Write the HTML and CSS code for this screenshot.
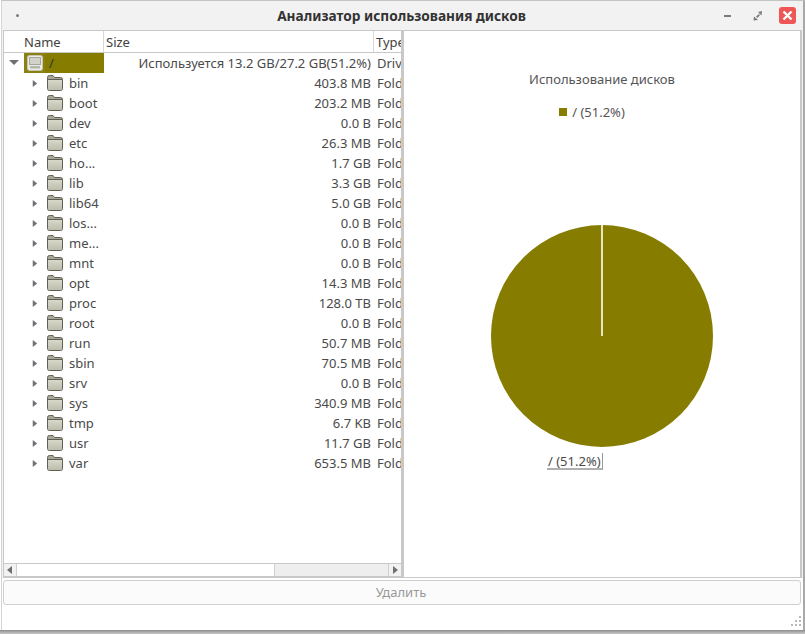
FILE: index.html
```html
<!DOCTYPE html>
<html lang="ru">
<head>
<meta charset="utf-8">
<title>Анализатор использования дисков</title>
<link rel="stylesheet" href="styles.css">
</head>
<body>
<svg class="defs" width="0" height="0" aria-hidden="true">
  <defs>
    <linearGradient id="fg" x1="0" y1="0" x2="0" y2="1"><stop offset="0" stop-color="#d8d8cb"/><stop offset="1" stop-color="#bdbdad"/></linearGradient>
  </defs>
  <symbol id="folder" viewBox="0 0 16 16">
    <path d="M0.5 2.5 Q0.5 0.5 2.5 0.5 H6 L7.5 2.5 H13.5 Q15.5 2.5 15.5 4.5 V13.5 Q15.5 15.5 13.5 15.5 H2.5 Q0.5 15.5 0.5 13.5 Z" fill="#a8a898" stroke="#5f5f54"/>
    <path d="M1 5 H15 V13.5 Q15 15 13.5 15 H2.5 Q1 15 1 13.5 Z" fill="url(#fg)"/>
    <path d="M1 4.5 H15" stroke="#5f5f54" fill="none"/>
  </symbol>
  <symbol id="arrow" viewBox="0 0 8 10">
    <path d="M2 1 L7 5 L2 9 Z" fill="#707070"/>
  </symbol>
</svg>
<main class="window">
  <header class="titlebar">
    <span class="menu-dot"></span>
    <h1 class="title">Анализатор использования дисков</h1>
    <div class="controls">
      <span class="minimize"></span>
      <svg class="maximize" width="10" height="10" viewBox="0 0 10 10"><path d="M5 1 L9 0 L8.5 4.5 Z M1 5.5 L0.5 9.5 L5 9 Z M3 5.5 L6 3 L7 4 L4.5 7 Z" fill="#7b7b7b"/></svg>
      <svg class="close" width="17" height="17" viewBox="0 0 17 17"><rect width="17" height="17" rx="3" fill="#ee5555"/><path d="M4.5 4.5 L12.5 12.5 M12.5 4.5 L4.5 12.5" stroke="#fff" stroke-width="2.4"/></svg>
    </div>
  </header>
  <div class="panes">
    <section class="tree-pane">
      <div class="tree-head">
        <div class="th th-name">Name</div>
        <div class="th th-size">Size</div>
        <div class="th th-type">Type</div>
      </div>
      <div class="tree-body">
        <div class="row">
          <div class="cell-name root-name">
            <svg class="expander-down" width="10" height="6" viewBox="0 0 10 6"><path d="M0 0 H10 L5 5 Z" fill="#707070"/></svg>
            <span class="selected">
              <span class="drive-box">
                <svg class="drive" width="16" height="16" viewBox="0 0 16 16"><rect x="0.5" y="0.5" width="15" height="15" rx="2" fill="#ecece6" stroke="#c4c4b4"/><rect x="2.5" y="2.5" width="11" height="7" fill="#d2d2cb" stroke="#a5a59b"/><rect x="3" y="11" width="10" height="2.5" fill="#b5b5aa"/></svg>
              </span>
              <span class="root-label">/</span>
            </span>
          </div>
          <div class="cell-size">Используется 13.2 GB/27.2 GB(51.2%)</div>
          <div class="cell-type">Drive</div>
        </div>
        <div class="row"><div class="cell-name"><svg class="arrow"><use href="#arrow"/></svg><svg class="folder"><use href="#folder"/></svg><span class="label">bin</span></div><div class="cell-size">403.8 MB</div><div class="cell-type">Folder</div></div>
        <div class="row"><div class="cell-name"><svg class="arrow"><use href="#arrow"/></svg><svg class="folder"><use href="#folder"/></svg><span class="label">boot</span></div><div class="cell-size">203.2 MB</div><div class="cell-type">Folder</div></div>
        <div class="row"><div class="cell-name"><svg class="arrow"><use href="#arrow"/></svg><svg class="folder"><use href="#folder"/></svg><span class="label">dev</span></div><div class="cell-size">0.0 B</div><div class="cell-type">Folder</div></div>
        <div class="row"><div class="cell-name"><svg class="arrow"><use href="#arrow"/></svg><svg class="folder"><use href="#folder"/></svg><span class="label">etc</span></div><div class="cell-size">26.3 MB</div><div class="cell-type">Folder</div></div>
        <div class="row"><div class="cell-name"><svg class="arrow"><use href="#arrow"/></svg><svg class="folder"><use href="#folder"/></svg><span class="label">ho...</span></div><div class="cell-size">1.7 GB</div><div class="cell-type">Folder</div></div>
        <div class="row"><div class="cell-name"><svg class="arrow"><use href="#arrow"/></svg><svg class="folder"><use href="#folder"/></svg><span class="label">lib</span></div><div class="cell-size">3.3 GB</div><div class="cell-type">Folder</div></div>
        <div class="row"><div class="cell-name"><svg class="arrow"><use href="#arrow"/></svg><svg class="folder"><use href="#folder"/></svg><span class="label">lib64</span></div><div class="cell-size">5.0 GB</div><div class="cell-type">Folder</div></div>
        <div class="row"><div class="cell-name"><svg class="arrow"><use href="#arrow"/></svg><svg class="folder"><use href="#folder"/></svg><span class="label">los...</span></div><div class="cell-size">0.0 B</div><div class="cell-type">Folder</div></div>
        <div class="row"><div class="cell-name"><svg class="arrow"><use href="#arrow"/></svg><svg class="folder"><use href="#folder"/></svg><span class="label">me...</span></div><div class="cell-size">0.0 B</div><div class="cell-type">Folder</div></div>
        <div class="row"><div class="cell-name"><svg class="arrow"><use href="#arrow"/></svg><svg class="folder"><use href="#folder"/></svg><span class="label">mnt</span></div><div class="cell-size">0.0 B</div><div class="cell-type">Folder</div></div>
        <div class="row"><div class="cell-name"><svg class="arrow"><use href="#arrow"/></svg><svg class="folder"><use href="#folder"/></svg><span class="label">opt</span></div><div class="cell-size">14.3 MB</div><div class="cell-type">Folder</div></div>
        <div class="row"><div class="cell-name"><svg class="arrow"><use href="#arrow"/></svg><svg class="folder"><use href="#folder"/></svg><span class="label">proc</span></div><div class="cell-size">128.0 TB</div><div class="cell-type">Folder</div></div>
        <div class="row"><div class="cell-name"><svg class="arrow"><use href="#arrow"/></svg><svg class="folder"><use href="#folder"/></svg><span class="label">root</span></div><div class="cell-size">0.0 B</div><div class="cell-type">Folder</div></div>
        <div class="row"><div class="cell-name"><svg class="arrow"><use href="#arrow"/></svg><svg class="folder"><use href="#folder"/></svg><span class="label">run</span></div><div class="cell-size">50.7 MB</div><div class="cell-type">Folder</div></div>
        <div class="row"><div class="cell-name"><svg class="arrow"><use href="#arrow"/></svg><svg class="folder"><use href="#folder"/></svg><span class="label">sbin</span></div><div class="cell-size">70.5 MB</div><div class="cell-type">Folder</div></div>
        <div class="row"><div class="cell-name"><svg class="arrow"><use href="#arrow"/></svg><svg class="folder"><use href="#folder"/></svg><span class="label">srv</span></div><div class="cell-size">0.0 B</div><div class="cell-type">Folder</div></div>
        <div class="row"><div class="cell-name"><svg class="arrow"><use href="#arrow"/></svg><svg class="folder"><use href="#folder"/></svg><span class="label">sys</span></div><div class="cell-size">340.9 MB</div><div class="cell-type">Folder</div></div>
        <div class="row"><div class="cell-name"><svg class="arrow"><use href="#arrow"/></svg><svg class="folder"><use href="#folder"/></svg><span class="label">tmp</span></div><div class="cell-size">6.7 KB</div><div class="cell-type">Folder</div></div>
        <div class="row"><div class="cell-name"><svg class="arrow"><use href="#arrow"/></svg><svg class="folder"><use href="#folder"/></svg><span class="label">usr</span></div><div class="cell-size">11.7 GB</div><div class="cell-type">Folder</div></div>
        <div class="row"><div class="cell-name"><svg class="arrow"><use href="#arrow"/></svg><svg class="folder"><use href="#folder"/></svg><span class="label">var</span></div><div class="cell-size">653.5 MB</div><div class="cell-type">Folder</div></div>
      </div>
      <div class="hscroll">
        <div class="sb-btn"><svg width="6" height="8" viewBox="0 0 6 8"><path d="M5 0 V8 L0 4 Z" fill="#707070"/></svg></div>
        <div class="sb-track"><div class="sb-thumb"></div></div>
        <div class="sb-btn"><svg width="6" height="8" viewBox="0 0 6 8"><path d="M1 0 V8 L6 4 Z" fill="#707070"/></svg></div>
      </div>
    </section>
    <section class="chart-pane">
      <div class="chart-title">Использование дисков</div>
      <div class="legend"><span class="swatch"></span><span>/ (51.2%)</span></div>
      <div class="pie-wrap">
        <svg class="pie" width="224" height="224" viewBox="0 0 224 224">
          <circle cx="112" cy="112" r="111" fill="#857c00"/>
          <path d="M112 1 V112" stroke="#e8e6c4" stroke-width="2" fill="none"/>
        </svg>
      </div>
      <div class="pie-label">/ (51.2%)</div>
    </section>
  </div>
  <div class="actions"><button class="delete" disabled>Удалить</button></div>
  <footer class="statusbar"><svg class="grip" width="11" height="11" viewBox="0 0 11 11"><path d="M9 0h2v2H9zM9 4h2v2H9zM5 4h2v2H5zM9 8h2v2H9zM5 8h2v2H5zM1 8h2v2H1z" fill="#b9b9b9"/></svg></footer>
</main>
<div class="backdrop-bottom"></div>
</body>
</html>
```
FILE: styles.css
```css
* { box-sizing: border-box; }
html, body { margin: 0; height: 100%; }
body {
  width: 805px; height: 634px; overflow: hidden; background: #fff;
  font: 13px/20px "Noto Sans", sans-serif; color: #4a4a4a;
  display: flex; flex-direction: column; position: relative;
}
.defs { position: absolute; }
.backdrop-bottom { flex: 1; background: linear-gradient(#8c8c8c, #c9c9c9); }
.window {
  width: 804px; height: 630px; margin-left: 1px; flex: none;
  display: flex; flex-direction: column; background: #fff;
  border-top: 1px solid #c4c4c4; border-right: 2px solid #a9a9a9; border-left: 1px solid #d4d4d4;
}
.titlebar {
  height: 29px; flex: none; background: #f2f2f2; display: flex; align-items: center; position: relative;
}
.menu-dot { width: 3px; height: 3px; border-radius: 50%; background: #7d7d7d; margin-left: 14px; }
.title {
  position: absolute; left: 0; right: 2px; margin: 0; text-align: center;
  font: 700 13.67px/28px "Noto Sans", sans-serif; color: #333;
}
.controls { margin-left: auto; margin-right: 7px; display: flex; align-items: center; position: relative; }
.minimize { width: 7px; height: 2px; background: #7b7b7b; margin-right: 22px; }
.maximize { margin-right: 16px; }
.panes { height: 548px; flex: none; display: flex; background: #f2f2f2; padding: 0 1px; }
.tree-pane {
  width: 400px; flex: none; border: 1px solid #c8c8c8; border-right-width: 2px;
  background: #fff; display: flex; flex-direction: column;
}
.tree-head { height: 22px; flex: none; display: flex; border-bottom: 1px solid #c8c8c8; color: #3f3f3f; line-height: 22px; overflow: hidden; }
.th { flex: none; border-right: 1px solid #d8d8d8; padding-left: 2px; overflow: hidden; }
.th-name { width: 100px; padding-left: 20px; }
.th-size { width: 270px; }
.th-type { width: 27px; border-right: 0; }
.tree-body { flex: 1; overflow: hidden; }
.row { height: 20px; display: flex; white-space: nowrap; }
.cell-name { width: 100px; flex: none; display: flex; align-items: center; padding-left: 27px; }
.root-name { padding-left: 5px; }
.arrow { width: 7px; height: 9px; flex: none; }
.folder { width: 16px; height: 16px; margin-left: 9px; flex: none; }
.label { margin-left: 6px; }
.expander-down { flex: none; margin-right: 5px; }
.selected { width: 80px; height: 20px; background: #857c00; display: flex; align-items: center; }
.drive-box { width: 21px; height: 20px; background: #8a8110; display: flex; align-items: center; justify-content: center; }
.root-label { margin-left: 4px; color: #333; }
.cell-size { width: 267px; flex: none; text-align: right; }
.cell-type { padding-left: 6px; overflow: hidden; width: 30px; flex: none; }
.hscroll { height: 14px; flex: none; border-top: 1px solid #c8c8c8; border-bottom: 1px solid #c8c8c8; display: flex; }
.sb-btn { width: 13px; flex: none; display: flex; align-items: center; justify-content: center; background: #f2f2f2; border-right: 1px solid #d0d0d0; }
.sb-btn:last-child { border-right: 0; border-left: 1px solid #d0d0d0; }
.sb-track { flex: 1; background: #eeeeee; }
.sb-thumb { width: 258px; height: 100%; background: #fff; border-right: 1px solid #d0d0d0; }
.chart-pane {
  flex: 1; background: #fff; border: 1px solid #c8c8c8; border-right-width: 2px; display: flex; flex-direction: column; align-items: center; position: relative;
}
.chart-title { margin-top: 38px; color: #555; }
.legend { margin-top: 13px; margin-right: 20px; display: flex; align-items: center; gap: 5px; color: #555; }
.swatch { width: 8px; height: 8px; background: #857c00; }
.pie-wrap { margin-top: 102px; display: flex; }
.pie-label { position: absolute; left: 143px; top: 422px; line-height: 17px; height: 17px; padding: 0 1px; border-right: 1px solid #999; border-bottom: 2px solid #b0b0b0; color: #4a4a4a; }
.actions { height: 27px; flex: none; padding: 2px 0 0 1px; background: #fff; }
.delete {
  width: 798px; height: 25px; display: block; background: #fbfbfb; border: 1px solid #cfcfcf; border-radius: 3px;
  font: 13px "Noto Sans", sans-serif; color: #9a9a9a; padding: 0 2px 2px 0;
}
.statusbar { flex: 1; background: #fff; display: flex; justify-content: flex-end; align-items: flex-end; padding: 0 2px 3px 0; }
.grip { display: block; }
```
